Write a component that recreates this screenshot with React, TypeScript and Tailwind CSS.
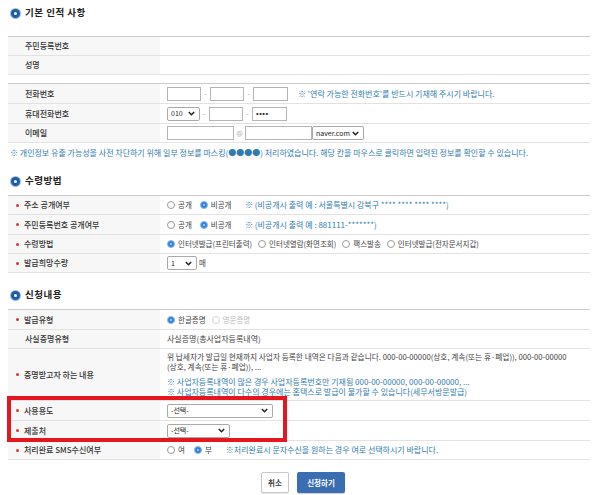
import React from "react";

const Chevron = () => (
  <svg width="7" height="5" viewBox="0 0 7 5" className="shrink-0">
    <path d="M0.8 0.9 L3.5 3.7 L6.2 0.9" fill="none" stroke="#222" strokeWidth="1.5" />
  </svg>
);

const HeadIcon = () => (
  <span className="flex h-[9px] w-[9px] items-center justify-center rounded-full bg-[#1d5da8] shadow-[0_0_0_1px_#9bbbe0]">
    <span className="h-[3px] w-[3px] rounded-full bg-white" />
  </span>
);

function Heading({ title }: { title: string }) {
  return (
    <div className="flex h-[12px] items-center gap-[5px] pl-[3px]">
      <HeadIcon />
      <span className="text-[9.5px] font-bold leading-none tracking-[0.5px] text-[#222]">{title}</span>
    </div>
  );
}

function Bullet() {
  return <span className="mr-[5px] inline-block h-[3px] w-[3px] rounded-full bg-[#d9333a]" />;
}

function Row({
  label,
  bullet,
  h,
  children,
  top,
}: {
  label: string;
  bullet?: boolean;
  h: string;
  children?: React.ReactNode;
  top?: boolean;
}) {
  return (
    <div className={`grid grid-cols-[152px_1fr] border-b border-[#e2e2e2] ${h}`}>
      <div className={`flex items-center bg-[#f7f7f7] text-[8px] font-medium text-[#333] ${bullet ? "pl-[8px]" : "pl-[17px]"}`}>
        {bullet && <Bullet />}
        <span className="leading-none">{label}</span>
      </div>
      <div className={`flex ${top ? "items-start" : "items-center"} pl-[7px] text-[7.5px] text-[#444]`}>{children}</div>
    </div>
  );
}

function Input({ w, children }: { w: string; children?: React.ReactNode }) {
  return (
    <span className={`flex h-[14px] items-center border border-[#b5b5b5] bg-white pl-[3px] text-[7px] leading-none text-[#222] ${w}`}>
      {children}
    </span>
  );
}

function Select({ w, text }: { w: string; text: string }) {
  return (
    <span
      className={`flex h-[14px] items-center justify-between rounded-[2px] border border-[#a9a9a9] bg-white pl-[3px] pr-[4px] text-[7px] leading-none text-[#222] ${w}`}
    >
      <span>{text}</span>
      <Chevron />
    </span>
  );
}

function Radio({ on, label, dim }: { on?: boolean; label: string; dim?: boolean }) {
  return (
    <span className={`flex items-center gap-[3px] ${dim ? "text-[#bbb]" : "text-[#444]"}`}>
      {on ? (
        <span className="flex h-[8px] w-[8px] items-center justify-center rounded-full border border-[#8fb9ea] bg-[#2f80e2]">
          <span className="h-[2px] w-[2px] rounded-full bg-[#bcd8f7]" />
        </span>
      ) : (
        <span className={`h-[8px] w-[8px] rounded-full border ${dim ? "border-[#d5d5d5]" : "border-[#9a9a9a]"} bg-white`} />
      )}
      <span className="leading-none">{label}</span>
    </span>
  );
}

const Dash = () => <span className="w-[9px] text-center text-[7px] text-[#999]">-</span>;

export default function App() {
  return (
    <div className="h-[495px] w-[600px] overflow-hidden bg-white pl-[8px] pr-[10px] pt-[7px] font-['Noto_Sans_CJK_KR','Noto_Sans',sans-serif]">
      <Heading title="기본 인적 사항" />

      <div className="mt-[17px] border-t border-[#cccccc]">
        <Row label="주민등록번호" h="h-[19px]" />
        <Row label="성명" h="h-[19px]" />
      </div>

      <div className="mt-[8px] border-t border-[#cccccc]">
        <Row label="전화번호" h="h-[20px]">
          <Input w="w-[34px]" />
          <Dash />
          <Input w="w-[34px]" />
          <Dash />
          <Input w="w-[35px]" />
          <span className="ml-[10px] text-[8px] text-[#2f7dae]">※ '연락 가능한 전화번호'를 반드시 기재해 주시기 바랍니다.</span>
        </Row>
        <Row label="휴대전화번호" h="h-[20px]">
          <Select w="w-[33px]" text="010" />
          <Dash />
          <Input w="w-[34px]" />
          <Dash />
          <Input w="w-[35px]">
            <span className="text-[7px] font-bold tracking-[0.5px]">••••</span>
          </Input>
        </Row>
        <Row label="이메일" h="h-[19px]">
          <Input w="w-[67px]" />
          <span className="w-[11px] text-center text-[7px] text-[#aaa]">@</span>
          <Input w="w-[67px]" />
          <Select w="w-[52px]" text="naver.com" />
        </Row>
      </div>

      <div className="flex h-[20px] items-center pl-[2px] text-[8px] text-[#2f7dae]">
        ※ 개인정보 유출 가능성을 사전 차단하기 위해 일부 정보를 마스킹(●●●●) 처리하였습니다. 해당 칸을 마우스로 클릭하면 입력된 정보를 확인할 수 있습니다.
      </div>

      <div className="mt-[12px]">
        <Heading title="수령방법" />
      </div>

      <div className="mt-[8px] border-t border-[#cccccc]">
        <Row label="주소 공개여부" bullet h="h-[19px]">
          <div className="flex w-[78px] items-center gap-[8px]">
            <Radio label="공개" />
            <Radio on label="비공개" />
          </div>
          <span className="text-[8px] text-[#2f7dae]">※ (비공개시 출력 예 : 서울특별시 강북구 **** **** **** ****)</span>
        </Row>
        <Row label="주민등록번호 공개여부" bullet h="h-[20px]">
          <div className="flex w-[78px] items-center gap-[8px]">
            <Radio label="공개" />
            <Radio on label="비공개" />
          </div>
          <span className="text-[8px] text-[#2f7dae]">※ (비공개시 출력 예 : 881111-*******)</span>
        </Row>
        <Row label="수령방법" bullet h="h-[19px]">
          <div className="flex items-center gap-[6px]">
            <Radio on label="인터넷발급(프린터출력)" />
            <Radio label="인터넷열람(화면조회)" />
            <Radio label="팩스발송" />
            <Radio label="인터넷발급(전자문서지갑)" />
          </div>
        </Row>
        <Row label="발급희망수량" bullet h="h-[19px]">
          <Select w="w-[30px]" text="1" />
          <span className="ml-[2px]">매</span>
        </Row>
      </div>

      <div className="mt-[16px]">
        <Heading title="신청내용" />
      </div>

      <div className="relative mt-[8px] border-t border-[#cccccc]">
        <Row label="발급유형" bullet h="h-[20px]">
          <div className="flex items-center gap-[6px]">
            <Radio on label="한글증명" />
            <Radio dim label="영문증명" />
          </div>
        </Row>
        <Row label="사실증명유형" h="h-[19px]">
          <span className="text-[8px]">사실증명(총사업자등록내역)</span>
        </Row>
        <Row label="증명받고자 하는 내용" bullet h="h-[52px]" top>
          <div className="pt-[3px] leading-[10px]">
            <div className="whitespace-nowrap text-[7.7px] text-[#444]">
              위 납세자가 발급일 현재까지 사업자 등록한 내역은 다음과 같습니다. 000-00-00000(상호, 계속(또는 휴·폐업)), 000-00-00000
              <br />
              (상호, 계속(또는 휴·폐업)), ...
            </div>
            <div className="mt-[5px] whitespace-nowrap text-[8px] text-[#2f7dae]">
              ※ 사업자등록내역이 많은 경우 사업자등록번호만 기재됨 000-00-00000, 000-00-00000, ...
              <br />
              ※ 사업자등록내역이 다수의 경우에는 홈택스로 발급이 불가할 수 있습니다(세무서방문발급)
            </div>
          </div>
        </Row>
        <Row label="사용용도" bullet h="h-[20px]">
          <Select w="w-[106px]" text="-선택-" />
        </Row>
        <Row label="제출처" bullet h="h-[20px]">
          <Select w="w-[63px]" text="-선택-" />
        </Row>
        <Row label="처리완료 SMS수신여부" bullet h="h-[19px]">
          <div className="flex items-center gap-[9px]">
            <Radio label="여" />
            <Radio on label="부" />
          </div>
          <span className="ml-[14px] text-[8px] text-[#2f7dae]">※처리완료시 문자수신을 원하는 경우 여로 선택하시기 바랍니다.</span>
        </Row>

        <div className="pointer-events-none absolute left-[-1px] top-[86px] h-[46px] w-[280px] border-[4px] border-[#e5161d]" />
      </div>

      <div className="mt-[12px] flex justify-center gap-[8px] pl-[8px]">
        <button className="flex h-[21px] w-[28px] items-center justify-center rounded-[2px] border border-[#c8c8c8] bg-white text-[7.5px] font-bold text-[#444] shadow-[0_1px_1px_rgba(0,0,0,0.1)]">
          취소
        </button>
        <button className="flex h-[21px] w-[48px] items-center justify-center rounded-[2px] bg-[#3a6db2] text-[7.5px] font-bold text-white shadow-[0_1px_1px_rgba(0,0,0,0.2)]">
          신청하기
        </button>
      </div>
    </div>
  );
}
